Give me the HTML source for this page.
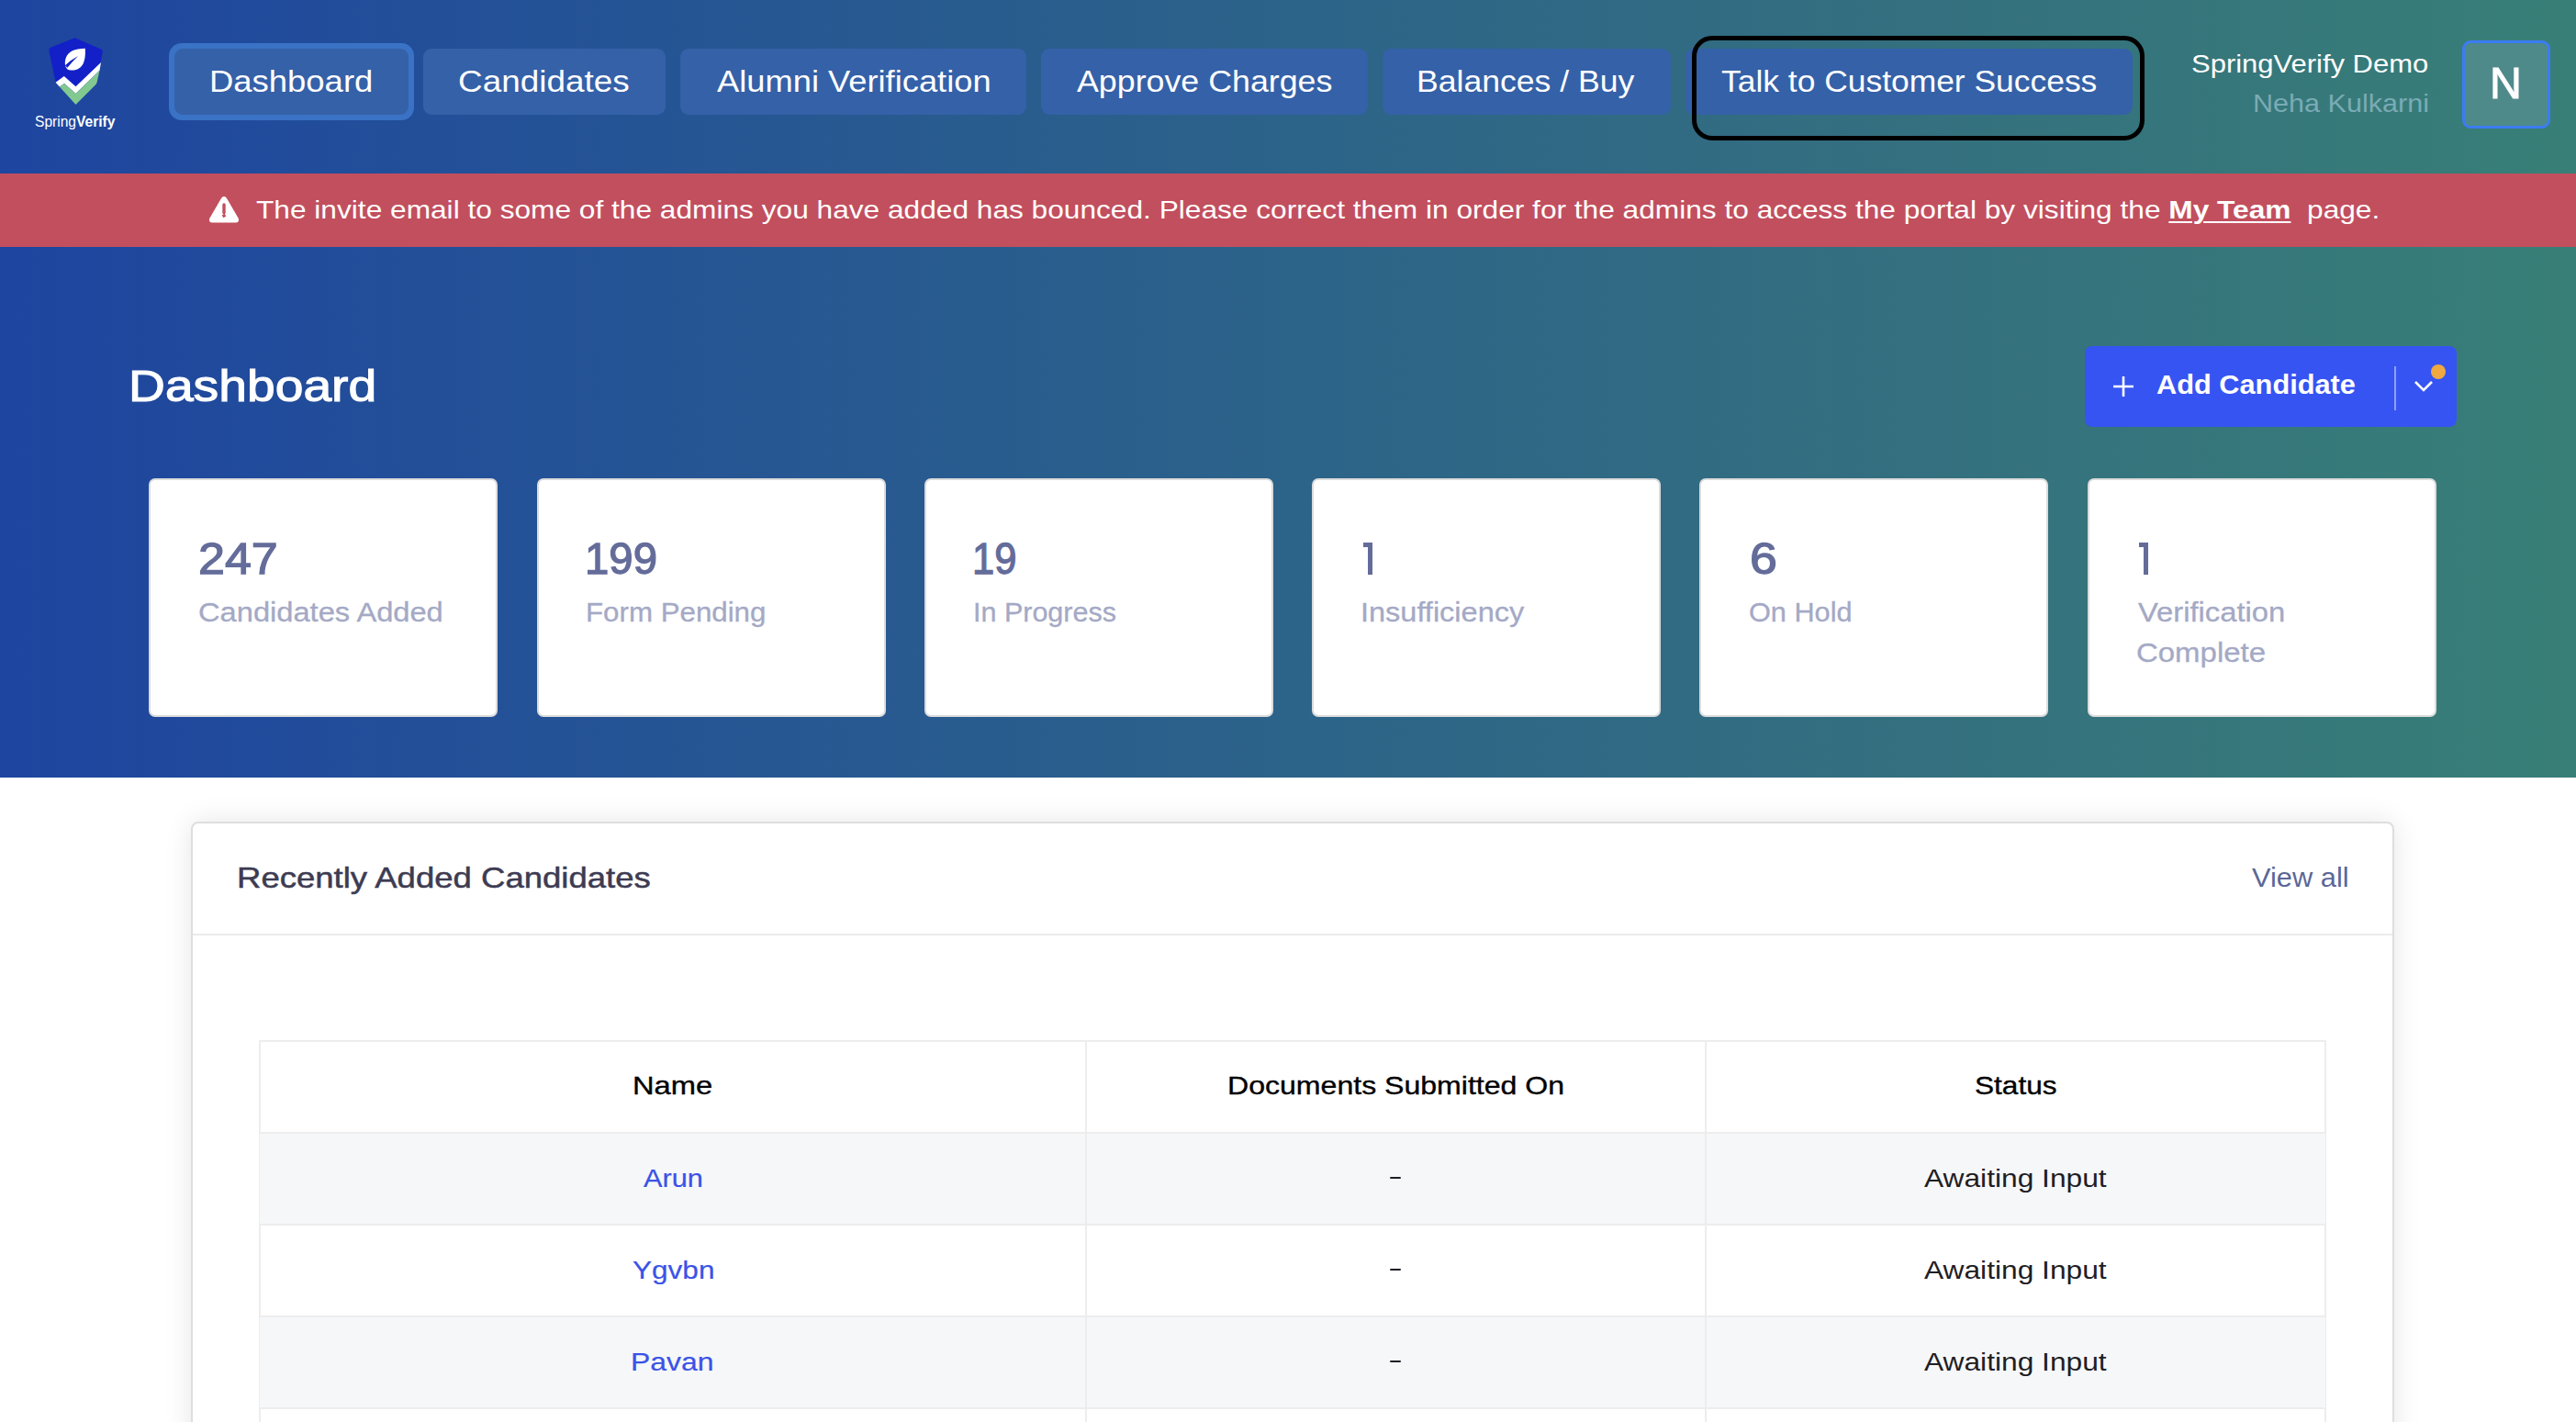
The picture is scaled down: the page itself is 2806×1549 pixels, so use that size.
<!DOCTYPE html>
<html><head><meta charset="utf-8">
<style>
*{margin:0;padding:0;box-sizing:border-box}
html,body{width:2806px;height:1549px;overflow:hidden;background:#fff;font-family:"Liberation Sans",sans-serif}
.a{position:absolute}
.t{position:absolute;white-space:nowrap;line-height:1;transform-origin:0 0}
#hero{left:0;top:0;width:2806px;height:847px;background:linear-gradient(90deg,#1e45a0 0%,#2c6389 50%,#34707f 75%,#387f77 100%)}
.nb{position:absolute;top:53px;height:72px;background:#3561a8;border-radius:9px}
#banner{left:0;top:189px;width:2806px;height:80px;background:#c24f5e}
.card{position:absolute;top:521px;width:380px;height:260px;background:#fff;border:2px solid #dcdcdc;border-radius:7px}
#main{left:208px;top:895px;width:2400px;height:760px;background:#fff;border:2px solid #dedede;border-radius:8px;box-shadow:0 0 30px rgba(0,0,0,0.1)}
.row{position:absolute;left:283px;width:2250px;height:100px}
.one{position:absolute;background:#646c9a}
</style></head>
<body>
<div id="hero" class="a"></div>

<!-- logo -->
<svg class="a" style="left:0;top:0" width="160" height="160" viewBox="0 0 160 160">
  <path d="M81.6,41.3 L55,51.7 Q53,52.6 53.3,55 L60.6,89.7 L82.5,114 L104,92.6 Q105.6,91 105.9,88.5 L111.7,56.5 Q112,54.4 110,53.6 Z" fill="#1320c8"/>
  <path d="M60.6,89.7 L69.8,83 L82.5,94.2 L110,67.9 L108.5,76.7 L82.5,102.1 L70.1,90.9 L64.8,94.5 Z" fill="#fff"/>
  <path d="M64.8,94.5 L70.1,90.9 L82.5,102.1 L108.5,76.7 L105.9,88.5 Q105.6,91 104,92.6 L82.5,114 Z" fill="#82c990"/>
  <path d="M92.8,52.8 C93,60 92.8,64 91,68.5 C88.5,74 84,76.7 78.5,76.6 C76,76.5 74,75.8 73.2,75.2 L71.3,72.3 C70.6,69.5 70.6,66 71.8,63 C74.5,56 81,52.9 92.8,52.8 Z" fill="#fff"/>
  <path d="M70.9,71.3 Q77.5,65 85,61 Q79,66.8 73.4,73.8 Z" fill="#1320c8"/>
</svg>

<!-- nav -->
<div class="a" style="left:184px;top:47px;width:267px;height:84px;border-radius:14px;background:#3a73c6"></div>
<div class="nb" style="left:190px;width:255px"></div>
<div class="nb" style="left:461px;width:264px"></div>
<div class="nb" style="left:741px;width:377px"></div>
<div class="nb" style="left:1134px;width:356px"></div>
<div class="nb" style="left:1506px;width:314px"></div>
<div class="nb" style="left:1836px;width:487px"></div>
<div class="a" style="left:1843px;top:39px;width:493px;height:114px;border:5px solid #000;border-radius:22px"></div>

<div class="a" style="left:2682px;top:44px;width:96px;height:96px;border:3.5px solid #3b7cf2;border-radius:9px;background:#4f8a8b"></div>

<!-- banner -->
<div id="banner" class="a"></div>
<svg class="a" style="left:226px;top:212px" width="36" height="32" viewBox="0 0 36 32">
  <path d="M18,2 C19.3,2 20.2,2.7 21,4 L33.5,25.5 C34.8,27.8 33.6,30.5 31,30.5 L5,30.5 C2.4,30.5 1.2,27.8 2.5,25.5 L15,4 C15.8,2.7 16.7,2 18,2 Z" fill="#fff"/>
  <path d="M18,11 L18,19.8" stroke="#c24f5e" stroke-width="3.4" stroke-linecap="round"/>
  <rect x="16.3" y="21.3" width="3.4" height="3.4" transform="rotate(-30 18 23)" fill="#c24f5e"/>
</svg>

<!-- add candidate -->
<div class="a" style="left:2271px;top:377px;width:405px;height:88px;background:#3654f2;border-radius:8px"></div>
<svg class="a" style="left:2300px;top:408px" width="26" height="26" viewBox="0 0 26 26"><path d="M13,2 V24 M2,13 H24" stroke="#fff" stroke-width="2.6"/></svg>
<div class="a" style="left:2608px;top:399px;width:1.5px;height:48px;background:rgba(255,255,255,0.45)"></div>
<svg class="a" style="left:2628px;top:412px" width="24" height="18" viewBox="0 0 24 18"><path d="M3,4 L12,13 L21,4" stroke="#fff" stroke-width="2.6" fill="none"/></svg>
<div class="a" style="left:2648px;top:397px;width:16px;height:16px;border-radius:50%;background:#f0a940"></div>

<!-- cards -->
<div class="card" style="left:162px"></div>
<div class="card" style="left:585px"></div>
<div class="card" style="left:1007px"></div>
<div class="card" style="left:1429px"></div>
<div class="card" style="left:1851px"></div>
<div class="card" style="left:2274px"></div>
<div class="one" style="left:1485.3px;top:591.2px;width:9.9px;height:4.6px"></div>
<div class="one" style="left:1490px;top:591.2px;width:5.2px;height:34.6px"></div>
<div class="one" style="left:2330.3px;top:591.2px;width:9.9px;height:4.6px"></div>
<div class="one" style="left:2335px;top:591.2px;width:5.2px;height:34.6px"></div>

<!-- main card -->
<div id="main" class="a"></div>
<div class="a" style="left:210px;top:1017px;width:2396px;height:2px;background:#ebebeb"></div>

<!-- table -->
<div class="a" style="left:282px;top:1133px;width:2252px;height:500px;border:2px solid #ededed"></div>
<div class="row" style="top:1235px;background:#f6f7f9;height:98px"></div>
<div class="row" style="top:1435px;background:#f6f7f9;height:98px"></div>
<div class="a" style="left:284px;top:1233px;width:2248px;height:2px;background:#ededed"></div>
<div class="a" style="left:284px;top:1333px;width:2248px;height:2px;background:#ededed"></div>
<div class="a" style="left:284px;top:1433px;width:2248px;height:2px;background:#ededed"></div>
<div class="a" style="left:284px;top:1533px;width:2248px;height:2px;background:#ededed"></div>
<div class="a" style="left:1182px;top:1135px;width:2px;height:500px;background:#ededed"></div>
<div class="a" style="left:1857px;top:1135px;width:2px;height:500px;background:#ededed"></div>
<div class="a" style="left:1514.3px;top:1281.6px;width:11.4px;height:2.4px;border-radius:1.2px;background:#1b1e24"></div>
<div class="a" style="left:1514.3px;top:1381.6px;width:11.4px;height:2.4px;border-radius:1.2px;background:#1b1e24"></div>
<div class="a" style="left:1514.3px;top:1481.6px;width:11.4px;height:2.4px;border-radius:1.2px;background:#1b1e24"></div>

<div class="t" style="left:227.79px;top:72.27px;font-size:33px;color:#fff;transform:scaleX(1.1044);">Dashboard</div>
<div class="t" style="left:498.88px;top:72.27px;font-size:33px;color:#fff;transform:scaleX(1.1182);">Candidates</div>
<div class="t" style="left:780.50px;top:72.27px;font-size:33px;color:#fff;transform:scaleX(1.1000);">Alumni Verification</div>
<div class="t" style="left:1172.70px;top:72.27px;font-size:33px;color:#fff;transform:scaleX(1.0840);">Approve Charges</div>
<div class="t" style="left:1543.34px;top:72.27px;font-size:33px;color:#fff;transform:scaleX(1.0780);">Balances / Buy</div>
<div class="t" style="left:1874.90px;top:72.27px;font-size:33px;color:#fff;transform:scaleX(1.0730);">Talk to Customer Success</div>
<div class="t" style="left:2386.79px;top:56.30px;font-size:28px;color:#fff;transform:scaleX(1.1060);">SpringVerify Demo</div>
<div class="t" style="left:2454.38px;top:99.32px;font-size:27.5px;color:#7aabb5;transform:scaleX(1.1118);">Neha Kulkarni</div>
<div class="t" style="left:2712.28px;top:67.37px;font-size:48px;color:#fff;transform:scaleX(1.0069);-webkit-text-stroke:1px #fff;">N</div>
<div class="t" style="left:278.70px;top:213.87px;font-size:28.5px;color:#fff;transform:scaleX(1.1107);">The invite email to some of the admins you have added has bounced. Please correct them in order for the admins to access the portal by visiting the <b style="text-decoration:underline;text-underline-offset:3px;text-decoration-thickness:2px">My Team</b>&nbsp; page.</div>
<div class="t" style="left:139.87px;top:395.91px;font-size:48.3px;color:#fff;transform:scaleX(1.1437);-webkit-text-stroke:1.1px #fff;">Dashboard</div>
<div class="t" style="left:2349.04px;top:405.25px;font-size:29px;font-weight:700;color:#fff;transform:scaleX(1.0601);">Add Candidate</div>
<div class="t" style="left:215.58px;top:584.12px;font-size:49px;color:#646c9a;transform:scaleX(1.0615);-webkit-text-stroke:1.3px #646c9a;">247</div>
<div class="t" style="left:636.90px;top:584.12px;font-size:49px;color:#646c9a;transform:scaleX(0.9662);-webkit-text-stroke:1.3px #646c9a;">199</div>
<div class="t" style="left:1059.14px;top:584.12px;font-size:49px;color:#646c9a;transform:scaleX(0.8880);-webkit-text-stroke:1.3px #646c9a;">19</div>
<div class="t" style="left:1905.51px;top:584.12px;font-size:49px;color:#646c9a;transform:scaleX(1.0958);-webkit-text-stroke:1.3px #646c9a;">6</div>
<div class="t" style="left:216.17px;top:653.45px;font-size:29px;color:#a4a9c5;transform:scaleX(1.1255);-webkit-text-stroke:0.3px #a4a9c5;">Candidates Added</div>
<div class="t" style="left:637.64px;top:653.45px;font-size:29px;color:#a4a9c5;transform:scaleX(1.0782);-webkit-text-stroke:0.3px #a4a9c5;">Form Pending</div>
<div class="t" style="left:1059.70px;top:653.45px;font-size:29px;color:#a4a9c5;transform:scaleX(1.0514);-webkit-text-stroke:0.3px #a4a9c5;">In Progress</div>
<div class="t" style="left:1481.86px;top:653.45px;font-size:29px;color:#a4a9c5;transform:scaleX(1.1204);-webkit-text-stroke:0.3px #a4a9c5;">Insufficiency</div>
<div class="t" style="left:1904.94px;top:653.45px;font-size:29px;color:#a4a9c5;transform:scaleX(1.0577);-webkit-text-stroke:0.3px #a4a9c5;">On Hold</div>
<div class="t" style="left:2329.00px;top:653.45px;font-size:29px;color:#a4a9c5;transform:scaleX(1.1298);-webkit-text-stroke:0.3px #a4a9c5;">Verification</div>
<div class="t" style="left:2327.26px;top:697.45px;font-size:29px;color:#a4a9c5;transform:scaleX(1.1361);-webkit-text-stroke:0.3px #a4a9c5;">Complete</div>
<div class="t" style="left:257.79px;top:940.97px;font-size:31.7px;color:#3d3b52;transform:scaleX(1.1527);-webkit-text-stroke:0.5px #3d3b52;">Recently Added Candidates</div>
<div class="t" style="left:2453.20px;top:941.33px;font-size:29.5px;color:#5b6797;transform:scaleX(1.0444);">View all</div>
<div class="t" style="left:688.67px;top:1169.10px;font-size:28px;color:#000;transform:scaleX(1.1667);-webkit-text-stroke:0.35px #000;">Name</div>
<div class="t" style="left:1336.71px;top:1169.10px;font-size:28px;color:#000;transform:scaleX(1.1451);-webkit-text-stroke:0.35px #000;">Documents Submitted On</div>
<div class="t" style="left:2150.87px;top:1169.10px;font-size:28px;color:#000;transform:scaleX(1.1282);-webkit-text-stroke:0.35px #000;">Status</div>
<div class="t" style="left:701.30px;top:1269.52px;font-size:27.5px;color:#3a53e6;transform:scaleX(1.1175);-webkit-text-stroke:0.2px #3a53e6;">Arun</div>
<div class="t" style="left:688.70px;top:1369.52px;font-size:27.5px;color:#3a53e6;transform:scaleX(1.1468);-webkit-text-stroke:0.2px #3a53e6;">Ygvbn</div>
<div class="t" style="left:686.98px;top:1469.52px;font-size:27.5px;color:#3a53e6;transform:scaleX(1.1613);-webkit-text-stroke:0.2px #3a53e6;">Pavan</div>
<div class="t" style="left:2096.40px;top:1269.52px;font-size:27.5px;color:#1e2024;transform:scaleX(1.1529);">Awaiting Input</div>
<div class="t" style="left:2096.40px;top:1369.52px;font-size:27.5px;color:#1e2024;transform:scaleX(1.1529);">Awaiting Input</div>
<div class="t" style="left:2096.40px;top:1469.52px;font-size:27.5px;color:#1e2024;transform:scaleX(1.1529);">Awaiting Input</div>
<div class="t" style="left:37.81px;top:123.53px;font-size:16.5px;color:#fff;transform:scaleX(0.9440);">Spring<b>Verify</b></div>
</body></html>
